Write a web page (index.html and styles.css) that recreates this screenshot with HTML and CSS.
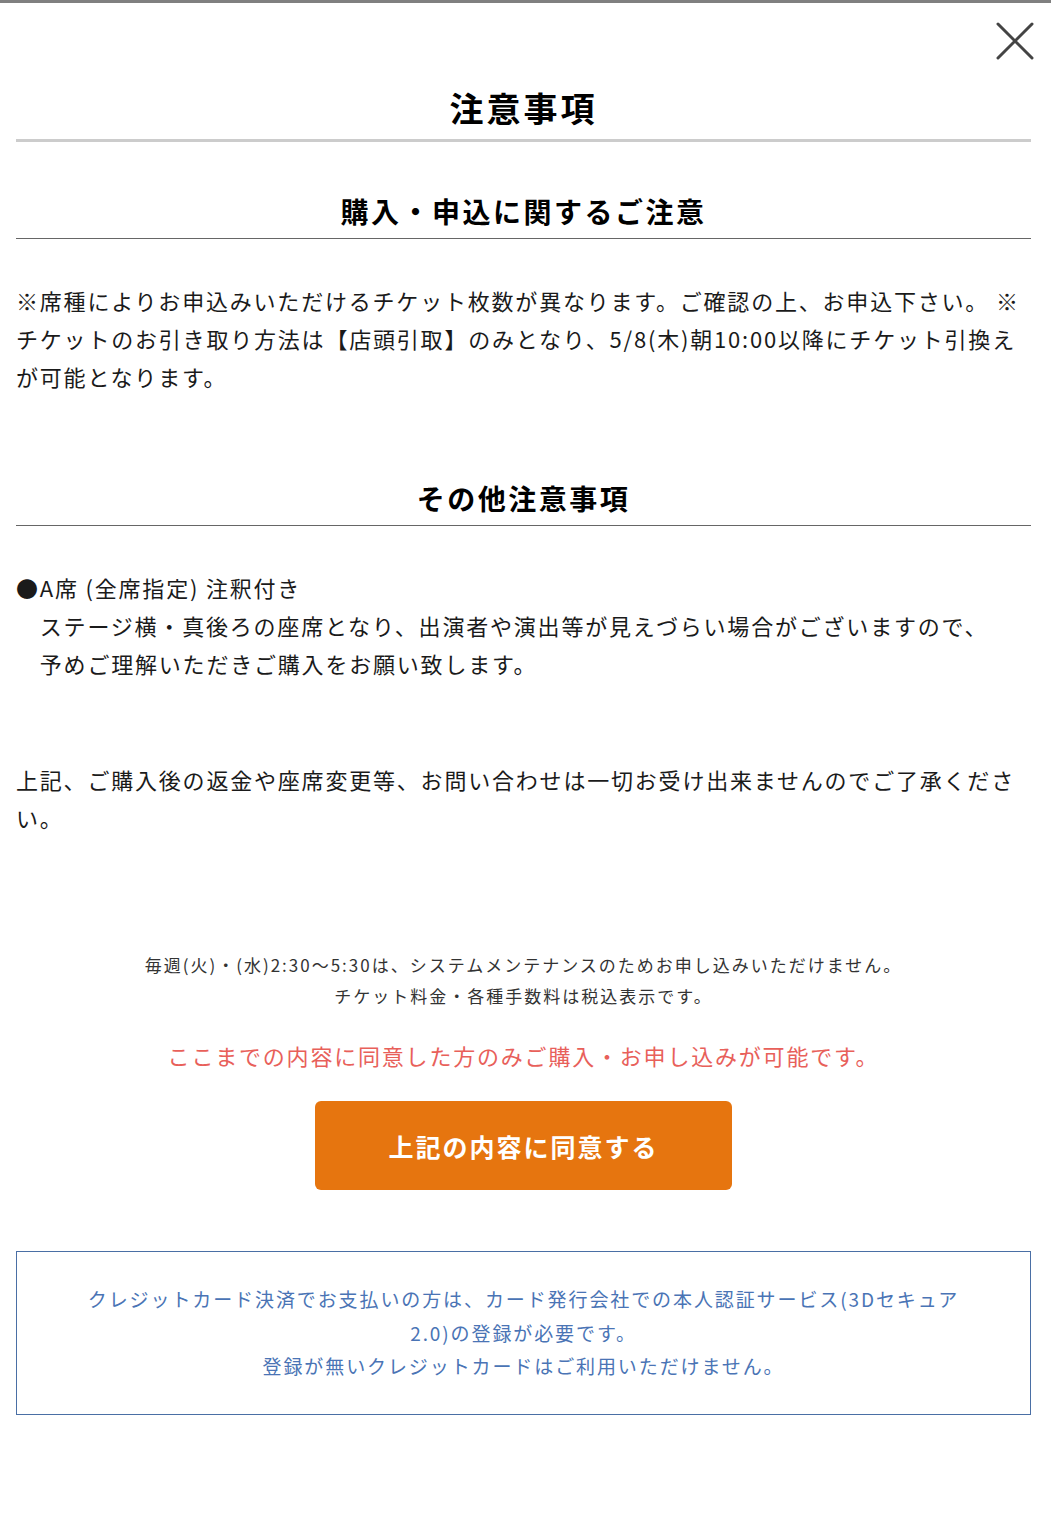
FILE: index.html
```html
<!DOCTYPE html>
<html lang="ja">
<head>
<meta charset="utf-8">
<title>注意事項</title>
<link rel="stylesheet" href="styles.css">
</head>
<body>
<div class="topbar"></div>
<div class="modal">
  <button class="close" aria-label="閉じる">
    <svg width="40" height="40" viewBox="0 0 40 40"><path d="M3 3 L37 37 M37 3 L3 37" stroke="#444" stroke-width="3" stroke-linecap="round" fill="none"/></svg>
  </button>
  <h1 class="title">注意事項</h1>

  <h2 class="heading">購入・申込に関するご注意</h2>
  <p class="body-text first">※席種によりお申込みいただけるチケット枚数が異なります。ご確認の上、お申込下さい。 ※チケットのお引き取り方法は【店頭引取】のみとなり、5/8(木)朝10:00以降にチケット引換えが可能となります。</p>

  <h2 class="heading second">その他注意事項</h2>
  <p class="body-text first">●A席 (全席指定) 注釈付き<br>　ステージ横・真後ろの座席となり、出演者や演出等が見えづらい場合がございますので、<br>　予めご理解いただきご購入をお願い致します。</p>
  <p class="body-text gap">上記、ご購入後の返金や座席変更等、お問い合わせは一切お受け出来ませんのでご了承ください。</p>

  <p class="notes">毎週(火)・(水)2:30〜5:30は、システムメンテナンスのためお申し込みいただけません。<br>チケット料金・各種手数料は税込表示です。</p>
  <p class="agree-note">ここまでの内容に同意した方のみご購入・お申し込みが可能です。</p>
  <div class="btn-row"><button class="agree-btn">上記の内容に同意する</button></div>

  <div class="card-box">
    <p>クレジットカード決済でお支払いの方は、カード発行会社での本人認証サービス(3Dセキュア2.0)の登録が必要です。<br>登録が無いクレジットカードはご利用いただけません。</p>
  </div>
</div>
</body>
</html>
```
FILE: styles.css
```css
* { box-sizing: border-box; }
html, body { margin: 0; padding: 0; background: #fff; }
body {
  font-family: "Noto Sans CJK JP", "Noto Sans", sans-serif;
  color: #1a1a1a;
}
.topbar { height: 3px; background: #808080; }
.modal {
  position: relative;
  padding: 0 20px 80px 16px;
}
.close {
  position: absolute;
  top: 18px;
  right: 16px;
  width: 40px;
  height: 40px;
  padding: 0;
  border: 0;
  background: none;
}
.close svg { display: block; }
.title {
  margin: 0;
  padding-top: 81px;
  padding-bottom: 7px;
  border-bottom: 3px solid #ccc;
  text-align: center;
  font-size: 34px;
  line-height: 48px;
  letter-spacing: 3px;
  font-weight: 700;
  color: #000;
}
.heading {
  margin: 48px 0 0;
  padding-bottom: 6px;
  border-bottom: 1px solid #666;
  text-align: center;
  font-size: 28px;
  line-height: 42px;
  letter-spacing: 2.5px;
  font-weight: 700;
  color: #000;
}
.heading.second { margin-top: 82px; }
.body-text {
  margin: 0;
  font-size: 22px;
  line-height: 38px;
  letter-spacing: 1.8px;
}
.body-text.first { margin-top: 42px; }
.body-text.gap { margin-top: 78px; }
.notes {
  margin: 113px 0 0;
  text-align: center;
  font-size: 17px;
  line-height: 31px;
  letter-spacing: 2px;
  color: #333;
}
.agree-note {
  margin: 28px 0 0;
  text-align: center;
  font-size: 22px;
  line-height: 32px;
  letter-spacing: 1.8px;
  color: #e8605a;
}
.btn-row {
  margin-top: 30px;
  display: flex;
  justify-content: center;
}
.agree-btn {
  width: 417px;
  height: 89px;
  border: 0;
  border-radius: 6px;
  background: #e6750f;
  color: #fff;
  font-family: inherit;
  font-size: 25px;
  font-weight: 700;
  letter-spacing: 2px;
}
.card-box {
  margin-top: 61px;
  border: 1px solid #4a6fa5;
  padding: 30px 60px 31px;
  text-align: center;
}
.card-box p {
  margin: 0;
  font-size: 19px;
  line-height: 33.5px;
  letter-spacing: 1.9px;
  color: #4a74b5;
}
```
